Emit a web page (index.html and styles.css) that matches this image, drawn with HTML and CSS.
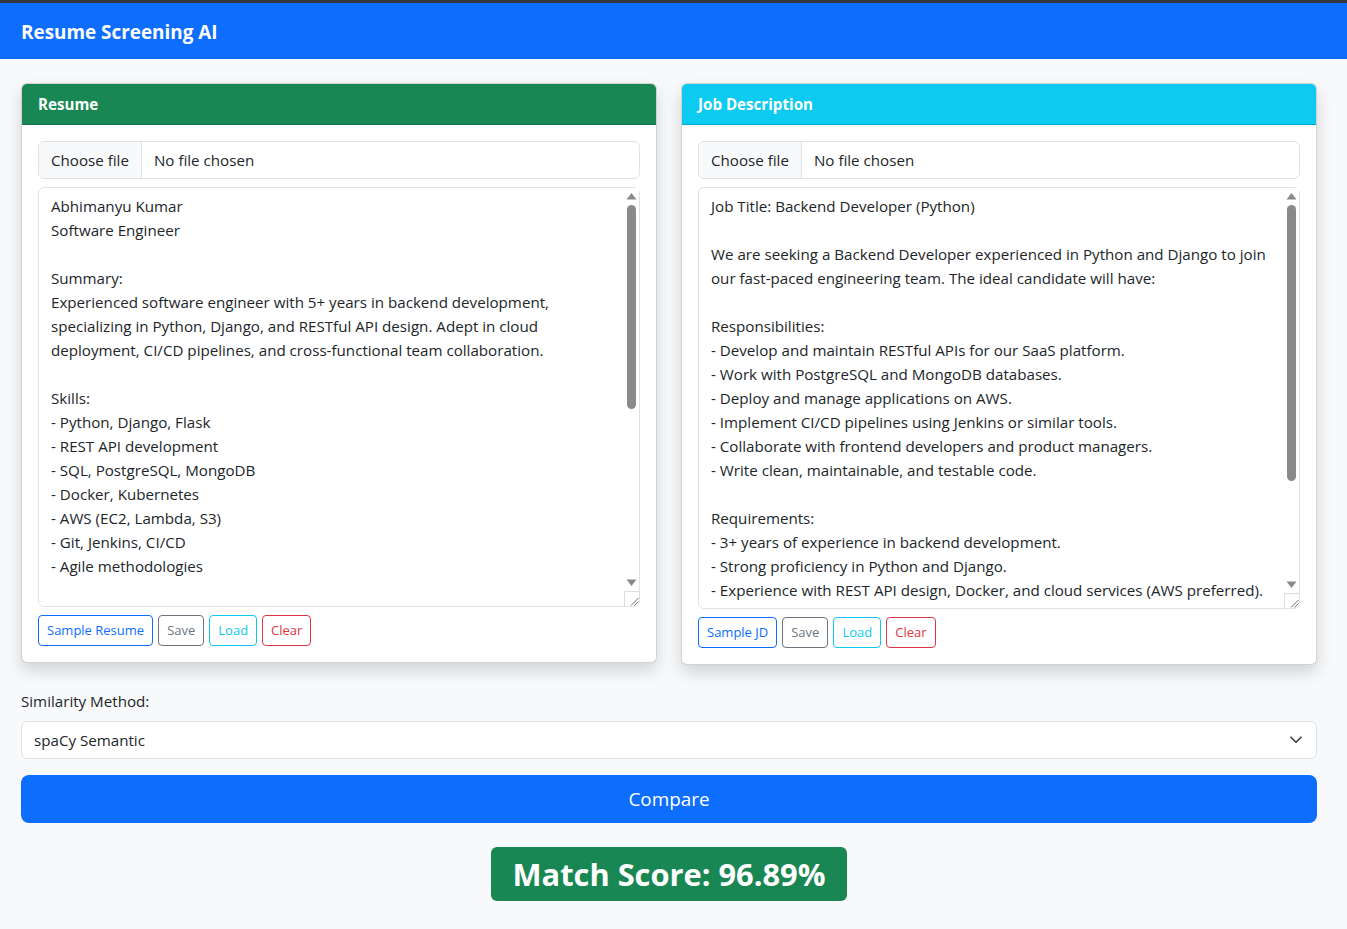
FILE: index.html
```html
<!DOCTYPE html>
<html lang="en">
<head>
<meta charset="utf-8">
<title>Resume Screening AI</title>
<link rel="stylesheet" href="styles.css">
</head>
<body>
<nav class="navbar"><span class="brand">Resume Screening AI</span></nav>
<main class="container">
  <div class="cards">
    <section class="card">
      <div class="card-header header-success">Resume</div>
      <div class="card-body">
        <label class="file"><span class="file-btn">Choose file</span><span class="file-name">No file chosen</span></label>
        <div class="text-wrap">
          <textarea class="text text-resume" spellcheck="false">Abhimanyu Kumar
Software Engineer

Summary:
Experienced software engineer with 5+ years in backend development,
specializing in Python, Django, and RESTful API design. Adept in cloud
deployment, CI/CD pipelines, and cross-functional team collaboration.

Skills:
- Python, Django, Flask
- REST API development
- SQL, PostgreSQL, MongoDB
- Docker, Kubernetes
- AWS (EC2, Lambda, S3)
- Git, Jenkins, CI/CD
- Agile methodologies

Experience:
Senior Software Engineer – TechNova Solutions (2021–Present)
- Designed and built scalable REST APIs using Django REST Framework.
- Migrated legacy services to AWS using Docker and Kubernetes.
- Implemented CI/CD pipelines with Jenkins and GitHub Actions.

Software Engineer – CodeCraft Pvt. Ltd. (2018–2021)
- Developed backend services in Python and Flask.
- Optimized PostgreSQL queries, improving performance by 40%.

Education:
B.Tech in Computer Science – Delhi Technological University (2018)

Certifications:
- AWS Certified Developer – Associate</textarea>
          <div class="scroll">
            <svg class="arrow" width="15" height="17" viewBox="0 0 15 17"><path d="M2.5 11.5L7.5 5L12.5 11.5Z" fill="#8a8a8a"/></svg>
            <div class="track"><div class="thumb thumb-resume"></div></div>
            <svg class="arrow" width="15" height="17" viewBox="0 0 15 17"><path d="M2.5 5.5L7.5 12L12.5 5.5Z" fill="#8a8a8a"/></svg>
          </div>
          <svg class="grip" width="15" height="15" viewBox="0 0 15 15"><path d="M0.5 15V0.5H15" fill="none" stroke="#dcdcdc"/><path d="M7 14.5L14.5 7M10.5 14.5L14.5 10.5" stroke="#707070" stroke-width="1"/></svg>
        </div>
        <div class="btns">
          <button class="btn btn-primary">Sample Resume</button>
          <button class="btn btn-secondary">Save</button>
          <button class="btn btn-info">Load</button>
          <button class="btn btn-danger">Clear</button>
        </div>
      </div>
    </section>
    <section class="card">
      <div class="card-header header-info">Job Description</div>
      <div class="card-body">
        <label class="file"><span class="file-btn">Choose file</span><span class="file-name">No file chosen</span></label>
        <div class="text-wrap">
          <textarea class="text text-jd" spellcheck="false">Job Title: Backend Developer (Python)

We are seeking a Backend Developer experienced in Python and Django to join
our fast-paced engineering team. The ideal candidate will have:

Responsibilities:
- Develop and maintain RESTful APIs for our SaaS platform.
- Work with PostgreSQL and MongoDB databases.
- Deploy and manage applications on AWS.
- Implement CI/CD pipelines using Jenkins or similar tools.
- Collaborate with frontend developers and product managers.
- Write clean, maintainable, and testable code.

Requirements:
- 3+ years of experience in backend development.
- Strong proficiency in Python and Django.
- Experience with REST API design, Docker, and cloud services (AWS preferred).
- Familiarity with Git and Agile methodologies.
- Bachelor's degree in Computer Science or a related field.

Nice to have:
- Experience with Kubernetes.
- Knowledge of Flask or FastAPI.</textarea>
          <div class="scroll">
            <svg class="arrow" width="15" height="17" viewBox="0 0 15 17"><path d="M2.5 11.5L7.5 5L12.5 11.5Z" fill="#8a8a8a"/></svg>
            <div class="track"><div class="thumb thumb-jd"></div></div>
            <svg class="arrow" width="15" height="17" viewBox="0 0 15 17"><path d="M2.5 5.5L7.5 12L12.5 5.5Z" fill="#8a8a8a"/></svg>
          </div>
          <svg class="grip" width="15" height="15" viewBox="0 0 15 15"><path d="M0.5 15V0.5H15" fill="none" stroke="#dcdcdc"/><path d="M7 14.5L14.5 7M10.5 14.5L14.5 10.5" stroke="#707070" stroke-width="1"/></svg>
        </div>
        <div class="btns">
          <button class="btn btn-primary">Sample JD</button>
          <button class="btn btn-secondary">Save</button>
          <button class="btn btn-info">Load</button>
          <button class="btn btn-danger">Clear</button>
        </div>
      </div>
    </section>
  </div>

  <label class="method-label">Similarity Method:</label>
  <div class="select-wrap">
    <div class="select">spaCy Semantic</div>
    <svg class="chev" width="12" height="8" viewBox="0 0 12 8"><path d="M1 1.2l5 5 5-5" fill="none" stroke="#343a40" stroke-width="1.6" stroke-linecap="round" stroke-linejoin="round"/></svg>
  </div>

  <button class="compare">Compare</button>

  <div class="score-wrap"><h2 class="score">Match Score: 96.89%</h2></div>
</main>
</body>
</html>
```
FILE: styles.css
```css
* { box-sizing: border-box; }
html, body { margin: 0; padding: 0; }
body {
  font-family: "Open Sans", "Noto Sans", sans-serif;
  font-size: 15.15px;
  line-height: 24px;
  color: #212529;
  background: #f8f9fa;
  min-height: 929px;
}
.navbar {
  border-top: 3px solid #33373d;
  background: #0d6efd;
  height: 59px;
  display: flex;
  align-items: center;
  padding: 0 21px;
}
.brand {
  color: #fff;
  font-weight: 700;
  font-size: 18.9px;
  line-height: 30px;
  padding-top: 2px;
}
.container {
  padding: 24px 21px 0 21px;
  width: 1338px;
}
.cards {
  display: grid;
  grid-template-columns: 636px 636px;
  column-gap: 24px;
  align-items: start;
}
.card {
  background: #fff;
  border: 1px solid rgba(0,0,0,.175);
  border-radius: 6px;
  box-shadow: 0 .5rem 1rem rgba(0,0,0,.15);
  overflow: hidden;
}
.card-header {
  color: #fff;
  font-weight: 700;
  padding: 8px 16px;
  height: 41px;
  font-size: 15.15px;
  line-height: 24px;
  border-bottom: 1px solid rgba(0,0,0,.175);
}
.header-success { background: #198754; }
.header-info { background: #0dcaf0; }
.card-body { padding: 16px; }
.file {
  display: flex;
  height: 38px;
  border: 1px solid #dee2e6;
  border-radius: 6px;
  overflow: hidden;
  margin-bottom: 8px;
  background: #fff;
}
.file-btn {
  background: #f8f9fa;
  border-right: 1px solid #dee2e6;
  padding: 6px 12px;
  line-height: 24px;
}
.file-name {
  padding: 6px 12px;
  line-height: 24px;
}
.text-wrap { position: relative; }
.text {
  display: block;
  width: 100%;
  border: 1px solid #dee2e6;
  border-radius: 6px;
  padding: 6px 27px 6px 12px;
  font-family: inherit;
  font-size: 15.15px;
  line-height: 24px;
  color: #212529;
  background: #fff;
  resize: none;
  white-space: pre;
  overflow: hidden;
  outline: none;
  margin: 0;
}
.text-resume { height: 420px; }
.text-jd { height: 422px; }
.scroll {
  position: absolute;
  top: 1px;
  right: 1px;
  bottom: 16px;
  width: 15px;
  display: flex;
  flex-direction: column;
  background: #fff;
}
.arrow { display: block; flex: none; }
.track { flex: 1; padding: 0 3px; }
.thumb {
  width: 9px;
  background: #8a8a8a;
  border-radius: 5px;
}
.thumb-resume { height: 204px; }
.thumb-jd { height: 276px; }
.grip {
  position: absolute;
  right: 1px;
  bottom: 1px;
  display: block;
}
.btns {
  display: flex;
  gap: 5px;
  margin-top: 8px;
}
.btn {
  font-family: inherit;
  font-size: 13px;
  line-height: 21px;
  padding: 4px 8px;
  border-radius: 4px;
  background: transparent;
  border: 1px solid;
  cursor: pointer;
}
.btn-primary { color: #0d6efd; border-color: #0d6efd; }
.btn-secondary { color: #6c757d; border-color: #6c757d; }
.btn-info { color: #0dcaf0; border-color: #0dcaf0; }
.btn-danger { color: #dc3545; border-color: #dc3545; }
.method-label {
  display: block;
  margin-top: 24px;
  margin-bottom: 8px;
  line-height: 24px;
}
.select-wrap { position: relative; }
.select {
  height: 38px;
  border: 1px solid #dee2e6;
  border-radius: 6px;
  background: #fff;
  padding: 6px 36px 6px 12px;
  line-height: 24px;
}
.chev {
  position: absolute;
  right: 15px;
  top: 15px;
}
.compare {
  display: block;
  width: 100%;
  margin-top: 16px;
  height: 48px;
  border: none;
  border-radius: 8px;
  background: #0d6efd;
  color: #fff;
  font-family: inherit;
  font-size: 18.9px;
  line-height: 30px;
  padding: 8px 16px;
}
.score-wrap {
  margin-top: 24px;
  text-align: center;
}
.score {
  display: inline-block;
  margin: 0;
  background: #198754;
  color: #fff;
  font-size: 30.8px;
  font-weight: 700;
  line-height: 38px;
  padding: 8px 22px;
  border-radius: 6px;
}
```
